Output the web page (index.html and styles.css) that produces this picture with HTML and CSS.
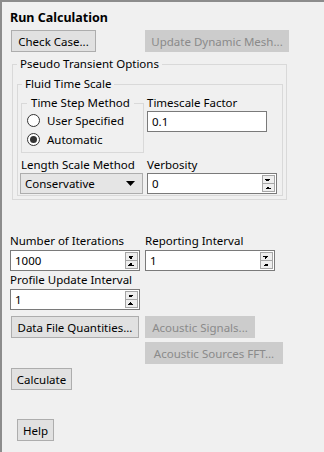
FILE: index.html
```html
<!DOCTYPE html>
<html lang="en">
<head>
  <meta charset="UTF-8">
  <title>Run Calculation</title>
  <link rel="stylesheet" href="styles.css">
</head>
<body>

<div class="panel">
  <div class="title">Run Calculation</div>

  <div class="btn-row">
    <button class="btn check-case">Check Case...</button>
    <button class="btn disabled mesh">Update Dynamic Mesh...</button>
  </div>

  <fieldset class="group pseudo">
    <legend>Pseudo Transient Options</legend>
    <fieldset class="group fluid">
      <legend>Fluid Time Scale</legend>
      <div class="fluid-grid">
        <fieldset class="group method">
          <legend>Time Step Method</legend>
          <div class="radio"><span class="circle"></span>User Specified</div>
          <div class="radio checked"><span class="circle"></span>Automatic</div>
        </fieldset>
        <div class="field">
          <div class="label">Timescale Factor</div>
          <div class="input timescale"><span class="value">0.1</span></div>
        </div>
        <div class="field">
          <div class="label">Length Scale Method</div>
          <div class="select">
            <span class="value">Conservative</span>
            <svg width="9" height="5" viewBox="0 0 9 5"><path d="M0 0h9L4.5 5z" fill="#000"/></svg>
          </div>
        </div>
        <div class="field">
          <div class="label">Verbosity</div>
          <div class="input verbosity">
            <span class="value">0</span>
            <span class="spin"></span>
          </div>
        </div>
      </div>
    </fieldset>
  </fieldset>

  <div class="iter-grid">
    <div class="field">
      <div class="label">Number of Iterations</div>
      <div class="input"><span class="value">1000</span><span class="spin"></span></div>
    </div>
    <div class="field">
      <div class="label">Reporting Interval</div>
      <div class="input"><span class="value">1</span><span class="spin"></span></div>
    </div>
    <div class="field">
      <div class="label">Profile Update Interval</div>
      <div class="input"><span class="value">1</span><span class="spin"></span></div>
    </div>
  </div>

  <div class="btn-row quantities">
    <button class="btn data-file">Data File Quantities...</button>
    <button class="btn disabled signals">Acoustic Signals...</button>
  </div>
  <div class="btn-row fft-row">
    <button class="btn disabled fft">Acoustic Sources FFT...</button>
  </div>
  <div class="btn-row calc-row">
    <button class="btn calculate">Calculate</button>
  </div>
  <div class="btn-row help-row">
    <button class="btn help">Help</button>
  </div>
</div>

</body>
</html>
```

FILE: styles.css
```css
* {
  box-sizing: border-box;
}

body {
  margin: 0;
  background: #f0f0f0;
  font-family: "Noto Sans", "Open Sans", sans-serif;
  font-size: 11.5px;
  color: #000000;
}

.panel {
  width: 324px;
  height: 452px;
  border-top: 2px solid #8c8c8c;
  border-left: 2px solid #8c8c8c;
  padding-left: 8px;
  background: #f0f0f0;
}

.title {
  margin-top: 8px;
  line-height: 16px;
  font-weight: bold;
  font-size: 12.5px;
}

/* Buttons */
.btn-row {
  display: flex;
  padding-left: 1px;
  margin-top: 4px;
}

.btn {
  height: 22px;
  padding: 0;
  border: 1px solid #adadad;
  background: #e1e1e1;
  font-family: inherit;
  font-size: 11.5px;
  color: #000000;
  text-align: center;
}

.btn.disabled {
  background: #cccccc;
  border-color: #cccccc;
  color: #8a8a8a;
}

.check-case { width: 85px; }
.mesh { width: 144px; margin-left: 49px; }
.data-file { width: 128px; }
.signals { width: 110px; margin-left: 6px; }
.fft { width: 138px; margin-left: 134px; }
.calculate { width: 61px; }

.btn-row:first-of-type { margin-top: 5px; }
.quantities { margin-top: 6px; }
.help-row { margin-top: 29px; padding-left: 7px; }
.help { width: 37px; }

/* Group boxes */
.group {
  margin: 0;
  border: 1px solid #d9d9d9;
  min-width: 0;
}

.group legend {
  padding: 0 3px;
  line-height: 14px;
}

.pseudo {
  width: 275px;
  margin: 5px 0 0 2px;
  padding: 6px 3px 3px 4px;
}

.fluid {
  padding: 5px 3px 1px 3px;
}

.fluid > legend {
  margin-left: 1px;
}

.fluid-grid {
  display: grid;
  grid-template-columns: 123px 1fr;
  column-gap: 3px;
  row-gap: 5px;
}

.method {
  padding: 1px 4px 3px 5px;
}

.method > legend {
  padding: 0 4px;
}

.radio {
  display: flex;
  align-items: center;
  height: 19px;
  gap: 7px;
}

.circle {
  width: 13px;
  height: 13px;
  border: 1px solid #333333;
  border-radius: 50%;
  background: #ffffff;
  display: flex;
  align-items: center;
  justify-content: center;
}

.radio.checked .circle::after {
  content: "";
  width: 7px;
  height: 7px;
  border-radius: 50%;
  background: #333333;
}

/* Fields */
.label {
  line-height: 14px;
  white-space: nowrap;
}

.label + .input,
.label + .select {
  margin-top: 1px;
}

.input {
  display: flex;
  align-items: center;
  height: 21px;
  width: 130px;
  border: 1px solid #7a7a7a;
  background: #ffffff;
  padding: 0 1px 0 4px;
}

.input .value {
  flex: 1;
}

.timescale { width: 120px; }
.verbosity { width: 130px; }

.spin {
  width: 13px;
  height: 17px;
  border: 1px solid #a6a6a6;
  background-color: #eeeeee;
  background-image:
    linear-gradient(#a6a6a6, #a6a6a6),
    linear-gradient(to top right, transparent 50%, #000 50%),
    linear-gradient(to top left, transparent 50%, #000 50%),
    linear-gradient(to bottom right, transparent 50%, #000 50%),
    linear-gradient(to bottom left, transparent 50%, #000 50%);
  background-size: 100% 1px, 3px 3px, 3px 3px, 3px 3px, 3px 3px;
  background-position: 0 7px, 2px 3px, 5px 3px, 2px 10px, 5px 10px;
  background-repeat: no-repeat;
}

.select {
  display: flex;
  align-items: center;
  justify-content: space-between;
  height: 21px;
  width: 123px;
  margin-left: -1px;
  border: 1px solid #adadad;
  background: #e5e5e5;
  padding: 0 7px 0 4px;
}

.iter-grid {
  display: grid;
  grid-template-columns: 130px 130px;
  column-gap: 5px;
  row-gap: 1px;
  margin-top: 33px;
}

.iter-grid .label {
  line-height: 15px;
}

.iter-grid .label + .input {
  margin-top: 2px;
}
```
